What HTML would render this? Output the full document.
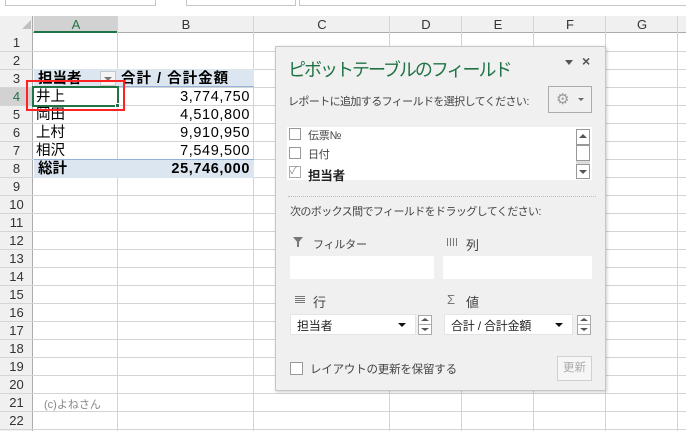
<!DOCTYPE html>
<html><head><meta charset="utf-8"><style>
*{margin:0;padding:0;box-sizing:border-box}
body{width:686px;height:431px;overflow:hidden;background:#fff;position:relative;font-family:"Liberation Sans","Noto Sans CJK JP",sans-serif;font-size:13px;color:#000}
.a{position:absolute}
.hl{position:absolute;left:0;width:686px;height:1px;background:#d4d4d4}
.vl{position:absolute;top:16px;width:1px;height:415px;background:#d4d4d4}
.rn{position:absolute;left:0;width:33px;height:18px;text-align:center;line-height:18px;font-size:13px;color:#333}
.ch{position:absolute;top:16px;height:17px;line-height:17px;text-align:center;font-size:13px;color:#333}
.t{position:absolute;line-height:18px;font-size:14.5px;white-space:nowrap}
.pl{position:absolute;font-size:11px;color:#444;white-space:nowrap;letter-spacing:-0.2px}
.box{position:absolute;background:#fff}
.cb{position:absolute;width:12px;height:12px;border:1px solid #999;background:#fff}
.up{position:absolute;border-left:4px solid transparent;border-right:4px solid transparent;border-bottom:3px solid #555}
.dn{position:absolute;border-left:4px solid transparent;border-right:4px solid transparent;border-top:3px solid #555}
</style></head><body>
<div class="a" style="left:5px;top:-1px;width:151px;height:7px;border:1px solid #c6c6c6;background:#fff"></div>
<div class="a" style="left:186px;top:-1px;width:110px;height:7px;border:1px solid #c6c6c6;background:#fff"></div>
<div class="a" style="left:299px;top:-1px;width:390px;height:7px;border:1px solid #c6c6c6;background:#fff"></div>
<div class="a" style="left:0;top:16px;width:686px;height:17px;background:#f0f0f0;border-bottom:1px solid #ababab"></div>
<div class="a" style="left:0;top:16px;width:33px;height:415px;background:#f0f0f0;border-right:1px solid #ababab"></div>
<div class="a" style="left:34px;top:16px;width:84px;height:17px;background:#d2d2d2;border-bottom:2px solid #217346"></div>
<div class="a" style="left:0;top:87px;width:33px;height:18px;background:#d2d2d2"></div>
<div class="a" style="left:22px;top:20px;width:0;height:0;border-left:9px solid transparent;border-bottom:9px solid #c0c0c0"></div>
<div class="ch" style="left:34px;width:84px;color:#217346">A</div>
<div class="ch" style="left:118px;width:136px">B</div>
<div class="ch" style="left:254px;width:136px">C</div>
<div class="ch" style="left:390px;width:72px">D</div>
<div class="ch" style="left:462px;width:72px">E</div>
<div class="ch" style="left:534px;width:72px">F</div>
<div class="ch" style="left:606px;width:72px">G</div>
<div class="hl" style="top:51px"></div><div class="hl" style="top:69px"></div><div class="hl" style="top:87px"></div><div class="hl" style="top:105px"></div><div class="hl" style="top:123px"></div><div class="hl" style="top:141px"></div><div class="hl" style="top:159px"></div><div class="hl" style="top:177px"></div><div class="hl" style="top:195px"></div><div class="hl" style="top:213px"></div><div class="hl" style="top:231px"></div><div class="hl" style="top:249px"></div><div class="hl" style="top:267px"></div><div class="hl" style="top:285px"></div><div class="hl" style="top:303px"></div><div class="hl" style="top:321px"></div><div class="hl" style="top:339px"></div><div class="hl" style="top:357px"></div><div class="hl" style="top:375px"></div><div class="hl" style="top:393px"></div><div class="hl" style="top:411px"></div><div class="hl" style="top:429px"></div>
<div class="vl" style="left:117px"></div><div class="vl" style="left:253px"></div><div class="vl" style="left:389px"></div><div class="vl" style="left:461px"></div><div class="vl" style="left:533px"></div><div class="vl" style="left:605px"></div><div class="vl" style="left:677px"></div>
<div class="rn" style="top:34px">1</div><div class="rn" style="top:52px">2</div><div class="rn" style="top:70px">3</div><div class="rn" style="top:88px;color:#217346">4</div><div class="rn" style="top:106px">5</div><div class="rn" style="top:124px">6</div><div class="rn" style="top:142px">7</div><div class="rn" style="top:160px">8</div><div class="rn" style="top:178px">9</div><div class="rn" style="top:196px">10</div><div class="rn" style="top:214px">11</div><div class="rn" style="top:232px">12</div><div class="rn" style="top:250px">13</div><div class="rn" style="top:268px">14</div><div class="rn" style="top:286px">15</div><div class="rn" style="top:304px">16</div><div class="rn" style="top:322px">17</div><div class="rn" style="top:340px">18</div><div class="rn" style="top:358px">19</div><div class="rn" style="top:376px">20</div><div class="rn" style="top:394px">21</div><div class="rn" style="top:412px">22</div>
<div class="a" style="left:34px;top:69px;width:220px;height:18px;background:#dce6f1;border-bottom:1px solid #95b3d7"></div>
<div class="a" style="left:34px;top:159px;width:220px;height:19px;background:#dce6f1;border-top:1px solid #95b3d7"></div>
<div class="t" style="left:38px;top:70px;font-weight:bold">担当者</div>
<div class="a" style="left:100px;top:71px;width:16px;height:15px;background:#f4f4f4;border:1px solid #c8c8c8"></div>
<div class="a" style="left:104px;top:77px;border-left:4px solid transparent;border-right:4px solid transparent;border-top:4px solid #777"></div>
<div class="t" style="left:121px;top:70px;font-weight:bold;letter-spacing:1px">合計 / 合計金額</div>
<div class="t" style="left:36px;top:88px">井上</div><div class="t" style="left:36px;top:106px">岡田</div><div class="t" style="left:36px;top:124px">上村</div><div class="t" style="left:36px;top:142px">相沢</div>
<div class="t" style="left:38px;top:160px;font-weight:bold">総計</div>
<div class="t" style="right:436px;top:88px;letter-spacing:0.6px">3,774,750</div><div class="t" style="right:436px;top:106px;letter-spacing:0.6px">4,510,800</div><div class="t" style="right:436px;top:124px;letter-spacing:0.6px">9,910,950</div><div class="t" style="right:436px;top:142px;letter-spacing:0.6px">7,549,500</div>
<div class="t" style="right:436px;top:160px;font-weight:bold;letter-spacing:0.6px">25,746,000</div>
<div class="a" style="left:32px;top:86px;width:87px;height:21px;border:2px solid #217346"></div>
<div class="a" style="left:115px;top:103px;width:5px;height:5px;background:#217346;border:1px solid #fff"></div>
<div class="a" style="left:26px;top:80px;width:99px;height:31px;border:2px solid #f22"></div>
<div class="a" style="left:44px;top:396px;font-size:11px;color:#888">(c)よねさん</div>
<div class="a" style="left:275px;top:46px;width:331px;height:345px;background:#f0f0f0;border:1px solid #c6c6c6;box-shadow:1px 1px 3px rgba(0,0,0,.2)"></div>
<div class="a" style="left:288px;top:56px;font-size:18px;color:#217346;white-space:nowrap;letter-spacing:-2px">ピボットテーブルのフィールド</div>
<div class="a" style="left:565px;top:60px;border-left:4px solid transparent;border-right:4px solid transparent;border-top:5px solid #555"></div>
<div class="a" style="left:582px;top:53px;font-size:14px;font-weight:bold;color:#555">×</div>
<div class="pl" style="left:288px;top:93px;letter-spacing:-0.6px">レポートに追加するフィールドを選択してください:</div>
<div class="a" style="left:548px;top:86px;width:44px;height:27px;border:1px solid #acacac;background:#f0f0f0"></div>
<div class="a" style="left:556px;top:90px;font-size:15px;color:#999">⚙</div>
<div class="a" style="left:578px;top:98px;border-left:3px solid transparent;border-right:3px solid transparent;border-top:3px solid #666"></div>
<div class="box" style="left:287px;top:127px;width:305px;height:53px"></div>
<div class="cb" style="left:289px;top:128px"></div><div class="pl" style="left:308px;top:127px">伝票№</div>
<div class="cb" style="left:289px;top:147px"></div><div class="pl" style="left:308px;top:146px">日付</div>
<div class="cb" style="left:289px;top:166px;border-color:#aaa;font-size:10px;line-height:10px;color:#888">✓</div><div class="pl" style="left:308px;top:165px;font-weight:bold;font-size:12.5px;color:#222">担当者</div>
<div class="a" style="left:576px;top:129px;width:14px;height:16px;border:1px solid #999;background:#fff"></div>
<div class="a" style="left:579px;top:134px;border-left:4px solid transparent;border-right:4px solid transparent;border-bottom:4px solid #555"></div>
<div class="a" style="left:576px;top:145px;width:14px;height:16px;border:1px solid #999;background:#fff"></div>
<div class="a" style="left:576px;top:161px;width:14px;height:3px;background:#ddd"></div>
<div class="a" style="left:576px;top:164px;width:14px;height:15px;border:1px solid #999;background:#fff"></div>
<div class="a" style="left:579px;top:170px;border-left:4px solid transparent;border-right:4px solid transparent;border-top:4px solid #555"></div>
<div class="a" style="left:288px;top:196px;width:308px;border-top:1px dotted #bbb"></div>
<div class="pl" style="left:290px;top:203px;letter-spacing:-0.6px">次のボックス間でフィールドをドラッグしてください:</div>
<div class="a" style="left:293px;top:237px;border-left:5px solid transparent;border-right:5px solid transparent;border-top:6px solid #777"></div>
<div class="a" style="left:297px;top:241px;width:2px;height:6px;background:#777"></div>
<div class="pl" style="left:313px;top:236px">フィルター</div>
<div class="a" style="left:447px;top:238px;width:10px;height:8px;background:repeating-linear-gradient(90deg,#777 0 1px,transparent 1px 3px)"></div>
<div class="pl" style="left:466px;top:235px;font-size:13px">列</div>
<div class="box" style="left:290px;top:256px;width:144px;height:23px"></div>
<div class="box" style="left:443px;top:256px;width:149px;height:23px"></div>
<div class="a" style="left:295px;top:296px;width:10px;height:7px;background:repeating-linear-gradient(180deg,#777 0 1px,transparent 1px 2px)"></div>
<div class="pl" style="left:313px;top:292px;font-size:13px">行</div>
<div class="pl" style="left:447px;top:292px;font-size:13px;color:#777">Σ</div>
<div class="pl" style="left:466px;top:292px;font-size:13px">値</div>
<div class="box" style="left:290px;top:314px;width:126px;height:21px;border:1px solid #e4e4e4"></div>
<div class="pl" style="left:297px;top:317px;color:#222;font-size:12px">担当者</div>
<div class="a" style="left:398px;top:323px;border-left:4px solid transparent;border-right:4px solid transparent;border-top:4px solid #111"></div>
<div class="box" style="left:418px;top:315px;width:14px;height:20px;border:1px solid #aaa"></div>
<div class="up" style="left:421px;top:318px"></div><div class="a" style="left:419px;top:324px;width:12px;height:1px;background:#aaa"></div><div class="dn" style="left:421px;top:328px"></div>
<div class="box" style="left:444px;top:314px;width:129px;height:21px;border:1px solid #e4e4e4"></div>
<div class="pl" style="left:451px;top:317px;color:#222;font-size:12px">合計 / 合計金額</div>
<div class="a" style="left:555px;top:323px;border-left:4px solid transparent;border-right:4px solid transparent;border-top:4px solid #111"></div>
<div class="box" style="left:577px;top:315px;width:14px;height:20px;border:1px solid #aaa"></div>
<div class="up" style="left:580px;top:318px"></div><div class="a" style="left:578px;top:324px;width:12px;height:1px;background:#aaa"></div><div class="dn" style="left:580px;top:328px"></div>
<div class="cb" style="left:290px;top:362px;width:13px;height:13px"></div>
<div class="pl" style="left:310px;top:361px;font-size:11.5px">レイアウトの更新を保留する</div>
<div class="a" style="left:557px;top:356px;width:35px;height:25px;border:1px solid #d0d0d0;background:#f6f6f6;font-size:11.5px;color:#aaa;text-align:center;line-height:23px">更新</div>
</body></html>
